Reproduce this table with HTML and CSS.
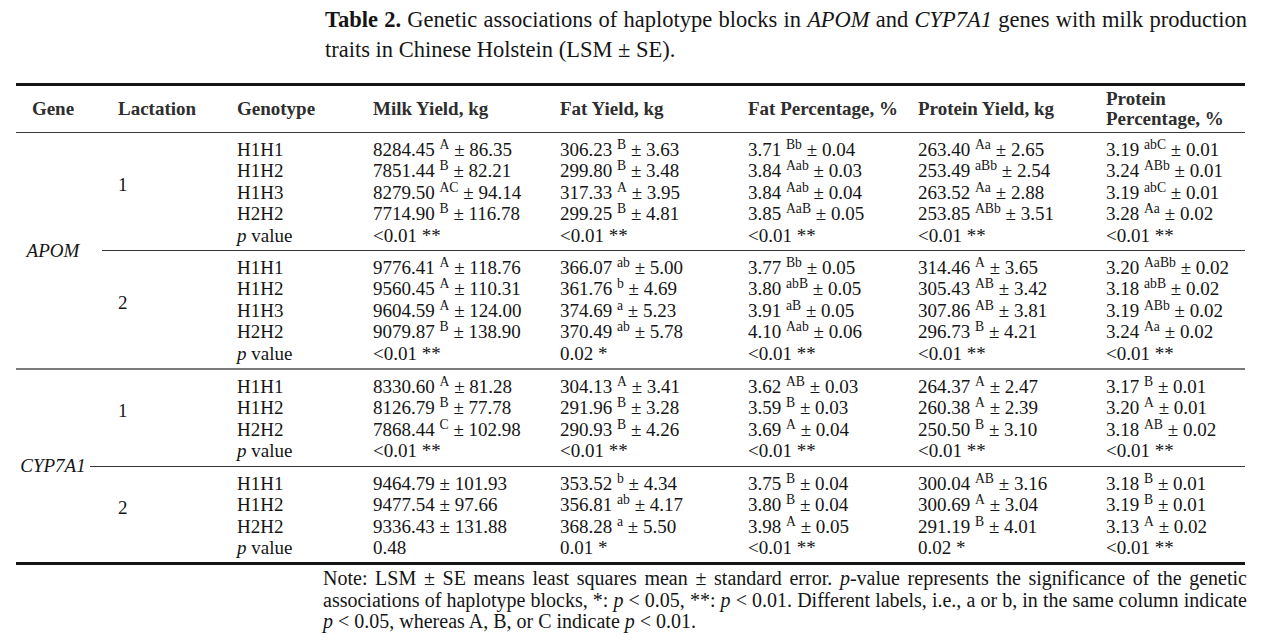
FILE: index.html
```html
<!DOCTYPE html>
<html lang="en">
<head>
<meta charset="utf-8">
<title>Table 2</title>
<link rel="stylesheet" href="styles.css">
</head>
<body>
<div class="page">
  <div class="caption">
    <div class="caption-line justify"><b>Table 2.</b> Genetic associations of haplotype blocks in <i>APOM</i> and <i>CYP7A1</i> genes with milk production</div>
    <div class="caption-line">traits in Chinese Holstein (LSM ± SE).</div>
  </div>

  <div class="table">
    <div class="head">
      <div class="hcell gene-h">Gene</div>
      <div class="hcell lact-h">Lactation</div>
      <div class="hcell">Genotype</div>
      <div class="hcell">Milk Yield, kg</div>
      <div class="hcell">Fat Yield, kg</div>
      <div class="hcell">Fat Percentage, %</div>
      <div class="hcell">Protein Yield, kg</div>
      <div class="hcell">Protein<br>Percentage, %</div>
    </div>

    <div class="group">
      <div class="gene"><i>APOM</i></div>
      <div class="blocks">
        <div class="block">
          <div class="lact">1</div>
          <div class="col">
            <div>H1H1</div><div>H1H2</div><div>H1H3</div><div>H2H2</div><div><i>p</i> value</div>
          </div>
          <div class="col">
            <div>8284.45 <span class="sup">A</span> ± 86.35</div>
            <div>7851.44 <span class="sup">B</span> ± 82.21</div>
            <div>8279.50 <span class="sup">AC</span> ± 94.14</div>
            <div>7714.90 <span class="sup">B</span> ± 116.78</div>
            <div>&lt;0.01 **</div>
          </div>
          <div class="col">
            <div>306.23 <span class="sup">B</span> ± 3.63</div>
            <div>299.80 <span class="sup">B</span> ± 3.48</div>
            <div>317.33 <span class="sup">A</span> ± 3.95</div>
            <div>299.25 <span class="sup">B</span> ± 4.81</div>
            <div>&lt;0.01 **</div>
          </div>
          <div class="col">
            <div>3.71 <span class="sup">Bb</span> ± 0.04</div>
            <div>3.84 <span class="sup">Aab</span> ± 0.03</div>
            <div>3.84 <span class="sup">Aab</span> ± 0.04</div>
            <div>3.85 <span class="sup">AaB</span> ± 0.05</div>
            <div>&lt;0.01 **</div>
          </div>
          <div class="col">
            <div>263.40 <span class="sup">Aa</span> ± 2.65</div>
            <div>253.49 <span class="sup">aBb</span> ± 2.54</div>
            <div>263.52 <span class="sup">Aa</span> ± 2.88</div>
            <div>253.85 <span class="sup">ABb</span> ± 3.51</div>
            <div>&lt;0.01 **</div>
          </div>
          <div class="col">
            <div>3.19 <span class="sup">abC</span> ± 0.01</div>
            <div>3.24 <span class="sup">ABb</span> ± 0.01</div>
            <div>3.19 <span class="sup">abC</span> ± 0.01</div>
            <div>3.28 <span class="sup">Aa</span> ± 0.02</div>
            <div>&lt;0.01 **</div>
          </div>
        </div>
        <div class="cline cline-apom"></div>
        <div class="block">
          <div class="lact">2</div>
          <div class="col">
            <div>H1H1</div><div>H1H2</div><div>H1H3</div><div>H2H2</div><div><i>p</i> value</div>
          </div>
          <div class="col">
            <div>9776.41 <span class="sup">A</span> ± 118.76</div>
            <div>9560.45 <span class="sup">A</span> ± 110.31</div>
            <div>9604.59 <span class="sup">A</span> ± 124.00</div>
            <div>9079.87 <span class="sup">B</span> ± 138.90</div>
            <div>&lt;0.01 **</div>
          </div>
          <div class="col">
            <div>366.07 <span class="sup">ab</span> ± 5.00</div>
            <div>361.76 <span class="sup">b</span> ± 4.69</div>
            <div>374.69 <span class="sup">a</span> ± 5.23</div>
            <div>370.49 <span class="sup">ab</span> ± 5.78</div>
            <div>0.02 *</div>
          </div>
          <div class="col">
            <div>3.77 <span class="sup">Bb</span> ± 0.05</div>
            <div>3.80 <span class="sup">abB</span> ± 0.05</div>
            <div>3.91 <span class="sup">aB</span> ± 0.05</div>
            <div>4.10 <span class="sup">Aab</span> ± 0.06</div>
            <div>&lt;0.01 **</div>
          </div>
          <div class="col">
            <div>314.46 <span class="sup">A</span> ± 3.65</div>
            <div>305.43 <span class="sup">AB</span> ± 3.42</div>
            <div>307.86 <span class="sup">AB</span> ± 3.81</div>
            <div>296.73 <span class="sup">B</span> ± 4.21</div>
            <div>&lt;0.01 **</div>
          </div>
          <div class="col">
            <div>3.20 <span class="sup">AaBb</span> ± 0.02</div>
            <div>3.18 <span class="sup">abB</span> ± 0.02</div>
            <div>3.19 <span class="sup">ABb</span> ± 0.02</div>
            <div>3.24 <span class="sup">Aa</span> ± 0.02</div>
            <div>&lt;0.01 **</div>
          </div>
        </div>
      </div>
    </div>

    <div class="group group-sep">
      <div class="gene"><i>CYP7A1</i></div>
      <div class="blocks">
        <div class="block">
          <div class="lact">1</div>
          <div class="col">
            <div>H1H1</div><div>H1H2</div><div>H2H2</div><div><i>p</i> value</div>
          </div>
          <div class="col">
            <div>8330.60 <span class="sup">A</span> ± 81.28</div>
            <div>8126.79 <span class="sup">B</span> ± 77.78</div>
            <div>7868.44 <span class="sup">C</span> ± 102.98</div>
            <div>&lt;0.01 **</div>
          </div>
          <div class="col">
            <div>304.13 <span class="sup">A</span> ± 3.41</div>
            <div>291.96 <span class="sup">B</span> ± 3.28</div>
            <div>290.93 <span class="sup">B</span> ± 4.26</div>
            <div>&lt;0.01 **</div>
          </div>
          <div class="col">
            <div>3.62 <span class="sup">AB</span> ± 0.03</div>
            <div>3.59 <span class="sup">B</span> ± 0.03</div>
            <div>3.69 <span class="sup">A</span> ± 0.04</div>
            <div>&lt;0.01 **</div>
          </div>
          <div class="col">
            <div>264.37 <span class="sup">A</span> ± 2.47</div>
            <div>260.38 <span class="sup">A</span> ± 2.39</div>
            <div>250.50 <span class="sup">B</span> ± 3.10</div>
            <div>&lt;0.01 **</div>
          </div>
          <div class="col">
            <div>3.17 <span class="sup">B</span> ± 0.01</div>
            <div>3.20 <span class="sup">A</span> ± 0.01</div>
            <div>3.18 <span class="sup">AB</span> ± 0.02</div>
            <div>&lt;0.01 **</div>
          </div>
        </div>
        <div class="cline"></div>
        <div class="block">
          <div class="lact">2</div>
          <div class="col">
            <div>H1H1</div><div>H1H2</div><div>H2H2</div><div><i>p</i> value</div>
          </div>
          <div class="col">
            <div>9464.79 ± 101.93</div>
            <div>9477.54 ± 97.66</div>
            <div>9336.43 ± 131.88</div>
            <div>0.48</div>
          </div>
          <div class="col">
            <div>353.52 <span class="sup">b</span> ± 4.34</div>
            <div>356.81 <span class="sup">ab</span> ± 4.17</div>
            <div>368.28 <span class="sup">a</span> ± 5.50</div>
            <div>0.01 *</div>
          </div>
          <div class="col">
            <div>3.75 <span class="sup">B</span> ± 0.04</div>
            <div>3.80 <span class="sup">B</span> ± 0.04</div>
            <div>3.98 <span class="sup">A</span> ± 0.05</div>
            <div>&lt;0.01 **</div>
          </div>
          <div class="col">
            <div>300.04 <span class="sup">AB</span> ± 3.16</div>
            <div>300.69 <span class="sup">A</span> ± 3.04</div>
            <div>291.19 <span class="sup">B</span> ± 4.01</div>
            <div>0.02 *</div>
          </div>
          <div class="col">
            <div>3.18 <span class="sup">B</span> ± 0.01</div>
            <div>3.19 <span class="sup">B</span> ± 0.01</div>
            <div>3.13 <span class="sup">A</span> ± 0.02</div>
            <div>&lt;0.01 **</div>
          </div>
        </div>
      </div>
    </div>
  </div>

  <div class="note">
    <div class="note-line justify">Note: LSM ± SE means least squares mean ± standard error. <i>p</i>-value represents the significance of the genetic</div>
    <div class="note-line justify">associations of haplotype blocks, *: <i>p</i> &lt; 0.05, **: <i>p</i> &lt; 0.01. Different labels, i.e., a or b, in the same column indicate</div>
    <div class="note-line"><i>p</i> &lt; 0.05, whereas A, B, or C indicate <i>p</i> &lt; 0.01.</div>
  </div>
</div>
</body>
</html>
```

FILE: styles.css
```css
* { box-sizing: border-box; }

html, body {
  margin: 0;
  padding: 0;
  background: #ffffff;
}

body {
  font-family: "Liberation Serif", "Times New Roman", serif;
  color: #151515;
}

.page {
  width: 1280px;
  height: 641px;
  overflow: hidden;
}

/* caption */
.caption {
  margin-left: 325px;
  width: 922px;
  padding-top: 5px;
  font-size: 22.5px;
  line-height: 30px;
}

.caption-line {
  white-space: nowrap;
}

.justify {
  text-align: justify;
  text-align-last: justify;
}

/* table */
.table {
  margin-left: 16px;
  width: 1229px;
  margin-top: 18px;
  border-top: 3px solid #161616;
  border-bottom: 3px solid #161616;
  font-size: 19px;
}

.head {
  display: grid;
  grid-template-columns: 74px 147px 136px 187px 188px 170px 188px 139px;
  align-items: center;
  height: 47px;
  border-bottom: 1px solid #3a3a3a;
  font-weight: bold;
  color: #2e2e2e;
  line-height: 20px;
}

.gene-h {
  text-align: center;
}

.lact-h {
  padding-left: 28px;
}

.group {
  display: grid;
  grid-template-columns: 74px 1fr;
}

.group-sep {
  border-top: 2px solid #7a7a7a;
}

.gene {
  align-self: center;
  text-align: center;
  line-height: 20px;
}

.blocks {
  display: flex;
  flex-direction: column;
}

.block {
  display: grid;
  grid-template-columns: 147px 136px 187px 188px 170px 188px 139px;
  padding: 6px 0 4px;
  line-height: 21.4px;
}

.lact {
  align-self: center;
  padding-left: 28px;
  padding-bottom: 16px;
}

.col > div {
  white-space: nowrap;
}

.cline {
  height: 1px;
  background: #333333;
}

.cline-apom {
  margin-left: 12px;
}

.sup {
  font-size: 0.72em;
  vertical-align: 0.5em;
  line-height: 0;
}

/* note */
.note {
  margin-left: 323px;
  width: 924px;
  padding-top: 3px;
  font-size: 20px;
  line-height: 21.5px;
}

.note-line {
  white-space: nowrap;
}
```
